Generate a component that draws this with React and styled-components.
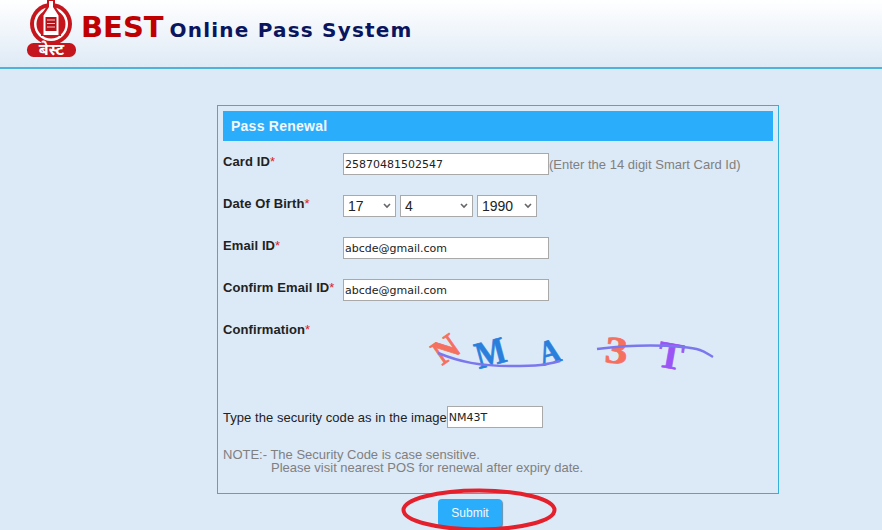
import React from 'react';
import styled, { createGlobalStyle } from 'styled-components';

const GlobalStyle = createGlobalStyle`
  html, body {
    margin: 0;
    padding: 0;
    background: #dce9f7;
    font-family: "Liberation Sans", Arial, sans-serif;
  }
`;

const Page = styled.div`
  width: 882px;
  height: 530px;
  overflow: hidden;
  position: relative;
`;

const Header = styled.header`
  height: 67px;
  border-bottom: 2px solid #4fb3d9;
  background: linear-gradient(to bottom, #ffffff, #deeaf6);
  display: flex;
  align-items: flex-start;
  padding-left: 27px;
`;

const Brand = styled.span`
  font-family: "DejaVu Sans", Verdana, sans-serif;
  font-weight: bold;
  font-size: 29px;
  line-height: 34px;
  color: #c00000;
  margin: 10px 0 0 4px;
`;

const Tagline = styled.span`
  font-family: "DejaVu Sans", Verdana, sans-serif;
  font-weight: bold;
  font-size: 20px;
  line-height: 24px;
  letter-spacing: 1.2px;
  color: #0a1560;
  margin: 18px 0 0 6px;
`;

const Panel = styled.form`
  box-sizing: border-box;
  width: 562px;
  height: 389px;
  margin: 36px 0 0 217px;
  padding: 5px;
  border: 1px solid #35b0d8;
`;

const PanelTitle = styled.h2`
  margin: 0 0 12px;
  height: 30px;
  padding-left: 8px;
  background: #2aaefb;
  color: #f2f8ff;
  font-size: 14px;
  letter-spacing: 0.25px;
  line-height: 30px;
  font-weight: bold;
`;

const Row = styled.div`
  display: grid;
  grid-template-columns: 120px 1fr;
  height: 42px;
`;

const Label = styled.label`
  padding-top: 1px;
  font-size: 13px;
  font-weight: bold;
  letter-spacing: 0.1px;
  line-height: 16px;
  color: #222;
`;

const Req = styled.span`
  color: #e02020;
  font-weight: normal;
`;

const Controls = styled.div`
  display: flex;
  align-items: flex-start;
  gap: 4px;
`;

const TextInput = styled.input`
  box-sizing: border-box;
  width: ${(p) => p.$width || 206}px;
  height: 22px;
  padding: 0 1px;
  border: 1px solid #a9a9a9;
  border-radius: 0;
  background: #fff;
  color: #222;
  font-family: "DejaVu Sans", Tahoma, sans-serif;
  font-size: 11px;
  outline: none;
`;

const Hint = styled.span`
  margin-left: -4px;
  font-size: 13px;
  line-height: 24px;
  color: #808080;
`;

const Select = styled.select`
  box-sizing: border-box;
  width: ${(p) => p.$width}px;
  height: 22px;
  padding: 0 0 0 4px;
  border: 1px solid #a9a9a9;
  border-radius: 0;
  appearance: none;
  background: #fff url("data:image/svg+xml,%3Csvg xmlns='http://www.w3.org/2000/svg' width='8' height='6'%3E%3Cpath d='M1 1l3 3 3-3' fill='none' stroke='%23666' stroke-width='1.600'/%3E%3C/svg%3E") no-repeat right 4px center;
  color: #222;
  font-family: "Liberation Sans", Arial, sans-serif;
  font-size: 14px;
`;

const CaptchaRow = styled.div`
  height: 85px;
  display: grid;
  grid-template-columns: 120px 1fr;
`;

const CaptchaImage = styled.svg`
  display: block;
  width: 300px;
  height: 60px;
  margin: 3px 0 0 77px;
  overflow: visible;
`;

const SecurityRow = styled.div`
  display: flex;
  align-items: center;
  height: 22px;
  margin-bottom: 20px;
  font-size: 13px;
  letter-spacing: 0.05px;
  color: #222;
`;

const Note = styled.p`
  margin: 0;
  font-size: 13px;
  line-height: 13px;
  color: #808080;
`;

const NoteLine = styled.span`
  display: block;
  padding-left: ${(p) => p.$indent || 0}px;
`;

const SubmitWrap = styled.div`
  display: flex;
  justify-content: center;
  margin-top: 5px;
  padding-left: 58px;
  width: 882px;
  box-sizing: border-box;
`;

const Submit = styled.button`
  width: 64px;
  height: 28px;
  border: none;
  border-radius: 4px;
  background: #2aaefb;
  box-shadow: 1px 1px 1px #5f8fb0;
  color: #f2f8ff;
  font-family: "Liberation Sans", Arial, sans-serif;
  font-size: 12px;
`;

const Circle = styled.svg`
  position: absolute;
  left: 398px;
  top: 487px;
`;

const LogoMark = styled.svg`
  display: block;
  flex: none;
  overflow: visible;
`;

const Logo = () => (
  <LogoMark width="50" height="66" viewBox="0 0 50 66">
    <circle cx="24" cy="24" r="21" fill="#c4161c" />
    <circle cx="24" cy="24" r="17" fill="#fff" />
    <circle cx="24" cy="24" r="14.500" fill="#c4161c" />
    <path d="M20 0h8v6l6 9v21H14V15l6-9z" fill="#c4161c" />
    <path d="M22 1h4v6l5.500 8.500V35h-15V15.500L22 7z" fill="#fff" />
    <path d="M18.500 17h11v14h-11z" fill="#b5131a" />
    <path d="M20 20h8M20 23.500h8M20 27h8" stroke="#f3c9c9" strokeWidth="1.200" />
    <rect x="0" y="43" width="49" height="14" rx="6.500" fill="#c4161c" />
    <text x="24.500" y="55" textAnchor="middle" fontSize="16" fontWeight="bold" fill="#fff" fontFamily='"Noto Sans", "DejaVu Sans", sans-serif'>बेस्ट</text>
  </LogoMark>
);

const Glyph = ({ x, y, sx = 1, size = 38, rot = 0, fill, children }) => (
  <text
    transform={`translate(${x} ${y}) rotate(${rot}) scale(${sx} 1)`}
    fill={fill}
    stroke={fill}
    strokeWidth="0.700"
    fontFamily='"Liberation Serif", serif'
    fontWeight="bold"
    fontSize={size}
  >
    {children}
  </text>
);

const Captcha = () => (
  <CaptchaImage viewBox="0 0 300 60">
    <Glyph x={22} y={42} rot={-35} size={35} fill="#f5705f">N</Glyph>
    <Glyph x={59} y={45} rot={-15} sx={0.85} fill="#2a7fdc">M</Glyph>
    <Glyph x={122} y={42} rot={-15} sx={0.85} size={35} fill="#2a7fdc">A</Glyph>
    <Glyph x={184} y={38} rot={5} sx={1.200} fill="#f5705f">3</Glyph>
    <Glyph x={236} y={42} rot={10} fill="#9b55f5">T</Glyph>
    <path d="M18 29C40 38 60 42 90 42S125 41 140 37" fill="none" stroke="#7b78ee" strokeWidth="2.500" />
    <path d="M177 25C210 21 240 21 262 23S284 28 293 33" fill="none" stroke="#7b78ee" strokeWidth="2.500" />
  </CaptchaImage>
);

const range = (from, to) => Array.from({ length: to - from + 1 }, (_, i) => from + i);

export default function App() {
  return (
    <Page>
      <GlobalStyle />
      <Header>
        <Logo />
        <Brand>BEST</Brand>
        <Tagline>Online Pass System</Tagline>
      </Header>
      <Panel onSubmit={(e) => e.preventDefault()}>
        <PanelTitle>Pass Renewal</PanelTitle>
        <Row>
          <Label>Card ID<Req>*</Req></Label>
          <Controls>
            <TextInput defaultValue="25870481502547" />
            <Hint>(Enter the 14 digit Smart Card Id)</Hint>
          </Controls>
        </Row>
        <Row>
          <Label>Date Of Birth<Req>*</Req></Label>
          <Controls>
            <Select $width={53} defaultValue="17">
              {range(1, 31).map((d) => <option key={d}>{d}</option>)}
            </Select>
            <Select $width={73} defaultValue="4">
              {range(1, 12).map((m) => <option key={m}>{m}</option>)}
            </Select>
            <Select $width={60} defaultValue="1990">
              {range(1950, 2010).map((y) => <option key={y}>{y}</option>)}
            </Select>
          </Controls>
        </Row>
        <Row>
          <Label>Email ID<Req>*</Req></Label>
          <Controls><TextInput defaultValue="abcde@gmail.com" /></Controls>
        </Row>
        <Row>
          <Label>Confirm Email ID<Req>*</Req></Label>
          <Controls><TextInput defaultValue="abcde@gmail.com" /></Controls>
        </Row>
        <CaptchaRow>
          <Label>Confirmation<Req>*</Req></Label>
          <Captcha />
        </CaptchaRow>
        <SecurityRow>
          Type the security code as in the image
          <TextInput $width={96} defaultValue="NM43T" />
        </SecurityRow>
        <Note>
          <NoteLine>NOTE:- The Security Code is case sensitive.</NoteLine>
          <NoteLine $indent={48}>Please visit nearest POS for renewal after expiry date.</NoteLine>
        </Note>
      </Panel>
      <SubmitWrap>
        <Submit type="submit">Submit</Submit>
      </SubmitWrap>
      <Circle width="162" height="46" viewBox="0 0 162 46">
        <ellipse cx="81" cy="23" rx="75.500" ry="19.500" fill="none" stroke="#e3202c" strokeWidth="4" />
      </Circle>
    </Page>
  );
}
